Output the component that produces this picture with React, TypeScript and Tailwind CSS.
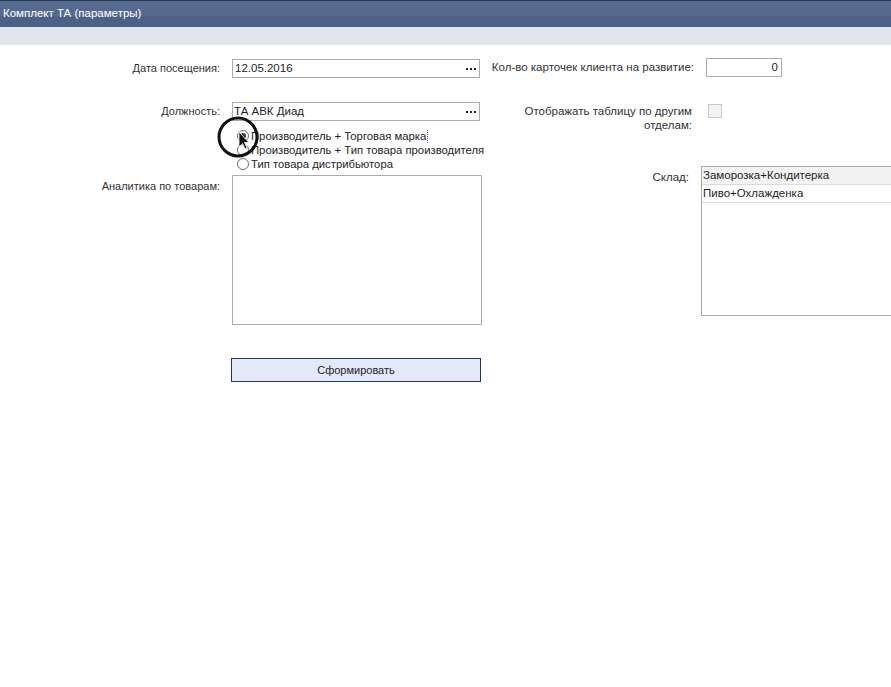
import React from 'react';

const font = { fontFamily: '"Liberation Sans", Arial, sans-serif' };

function Dots() {
    return (
        <span className="flex gap-[2px] pr-[3px]">
            <span className="w-[2px] h-[2px] bg-[#1a2433]" />
            <span className="w-[2px] h-[2px] bg-[#1a2433]" />
            <span className="w-[2px] h-[2px] bg-[#1a2433]" />
        </span>
    );
}

function Radio({ checked, label, focus }: { checked?: boolean; label: string; focus?: boolean }) {
    return (
        <div className="flex items-center h-[14px] whitespace-nowrap">
            <span className="w-[12px] h-[12px] rounded-full border border-[#6e6e6e] bg-white flex items-center justify-center mr-[2px] shrink-0">
                {checked && <span className="w-[6px] h-[6px] rounded-full bg-[#3c3c3c]" />}
            </span>
            <span className={focus ? 'border-r border-dotted border-[#555] pr-[1px] leading-[13px]' : 'leading-[13px]'}>{label}</span>
        </div>
    );
}

export default function App() {
    return (
        <div className="w-[891px] h-[687px] bg-white overflow-hidden relative text-[11px] text-[#1e1e1e]" style={font}>
            {/* Title bar */}
            <div className="h-[27px] border-t border-[#2b3a55] bg-[linear-gradient(to_bottom,#566a8f_0%,#566a8f_56%,#4b6188_56%,#4b6188_100%)] flex items-center pl-[3px] text-white text-[11.5px]">
                Комплект ТА (параметры)
            </div>
            <div className="h-[18px] bg-[#e0e5eb]" />

            <div className="flex pt-[14px]">
                {/* Left column */}
                <div className="w-[482px] shrink-0 flex flex-col">
                    <div className="flex items-center h-[19px]">
                        <div className="w-[220px] text-right text-[#333]">Дата посещения:</div>
                        <div className="ml-[12px] w-[248px] h-[19px] border border-[#ababab] flex items-center justify-between pl-[2px]">
                            <span className="text-[11.5px]">12.05.2016</span>
                            <Dots />
                        </div>
                    </div>

                    <div className="flex items-center h-[19px] mt-[24px]">
                        <div className="w-[220px] text-right text-[#333]">Должность:</div>
                        <div className="ml-[12px] w-[248px] h-[19px] border border-[#ababab] flex items-center justify-between pl-[1px]">
                            <span className="text-[11.5px]">ТА АВК Диад</span>
                            <Dots />
                        </div>
                    </div>

                    <div className="flex flex-col ml-[237px] mt-[8px] text-[11.3px]">
                        <Radio checked focus label="Производитель + Торговая марка" />
                        <Radio label="Производитель + Тип товара производителя" />
                        <Radio label="Тип товара дистрибьютора" />
                    </div>

                    <div className="flex mt-[4px]">
                        <div className="w-[220px] text-right text-[#333] pt-[3px]">Аналитика по товарам:</div>
                        <div className="ml-[12px] w-[250px] h-[150px] border border-[#ababab]" />
                    </div>

                    <button className="ml-[231px] mt-[33px] w-[250px] h-[24px] bg-[#e4e8fb] border border-[#1f3a5c] text-[11px] text-[#1e1e1e] flex items-center justify-center">
                        Сформировать
                    </button>
                </div>

                {/* Right column */}
                <div className="flex-1 flex flex-col">
                    <div className="flex items-center h-[19px] -mt-[1px]">
                        <div className="w-[212px] text-right text-[11.5px] text-[#333] whitespace-nowrap">Кол-во карточек клиента на развитие:</div>
                        <div className="ml-[12px] w-[76px] h-[19px] border border-[#ababab] flex items-center justify-end pr-[3px] text-[11.5px]">0</div>
                    </div>

                    <div className="flex items-start mt-[27px]">
                        <div className="w-[210px] text-right text-[11.5px] text-[#333] leading-[14px]">Отображать таблицу по другим<br />отделам:</div>
                        <div className="ml-[16px] mt-[0px] w-[14px] h-[14px] border border-[#c8c8c8] bg-[#f3f3f3]" />
                    </div>

                    <div className="flex items-start mt-[34px]">
                        <div className="w-[207px] text-right text-[11.5px] text-[#333] pt-[3px]">Склад:</div>
                        <div className="ml-[12px] w-[220px] h-[150px] border border-[#ababab] shrink-0 text-[11.5px]">
                            <div className="h-[18px] bg-[#f2f2f2] border-b border-[#dcdcdc] flex items-center pl-[1px]">Заморозка+Кондитерка</div>
                            <div className="h-[18px] border-b border-[#dcdcdc] flex items-center pl-[1px]">Пиво+Охлажденка</div>
                        </div>
                    </div>
                </div>
            </div>

            {/* Cursor highlight overlay */}
            <svg className="absolute left-[216px] top-[115px] pointer-events-none" width="46" height="46" viewBox="0 0 46 46">
                <circle cx="22" cy="22" r="19" fill="none" stroke="#111" strokeWidth="3" />
                <path d="M23 17 L23 32 L26.5 28.5 L29 34 L31 33 L28.5 27.5 L33 27.5 Z" fill="#111" stroke="#fff" strokeWidth="0.8" />
            </svg>
        </div>
    );
}
